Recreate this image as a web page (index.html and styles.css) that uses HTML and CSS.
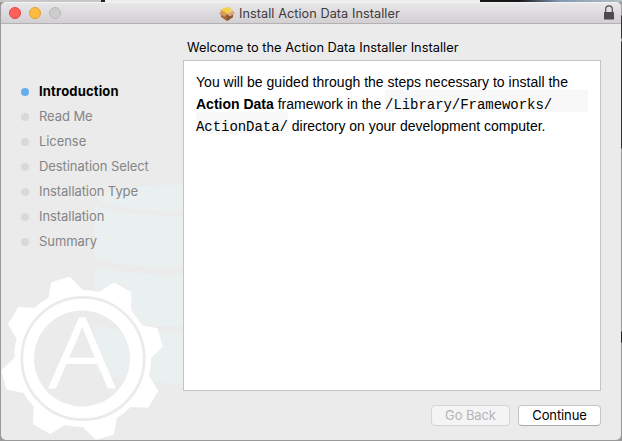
FILE: index.html
```html
<!DOCTYPE html>
<html lang="en">
<head>
<meta charset="utf-8">
<title>Install Action Data Installer</title>
<link rel="stylesheet" href="styles.css">
</head>
<body>
<main class="window">
  <header class="titlebar">
    <div class="lights"><i class="light red"></i><i class="light yellow"></i><i class="light off"></i></div>
    <div class="title">
      <svg class="package" viewBox="0 0 16 15" width="16" height="15">
        <path d="M2 6 8 8 14 6v5l-6 4-6-4z" fill="#a4683a"/>
        <path d="M8 9 14 6v5l-6 4z" fill="#8a5630"/>
        <path d="M1.500 3.500 9 .8 13.500 4 8 8z" fill="#f6cf4c"/>
        <path d="M1.500 3.500 8 7v1.500L2 6z" fill="#e0a93a"/>
        <path d="M2 5.5 0 8l5.500 2.500L8 8.300z" fill="#d3986a"/>
        <path d="M14 4.500 16 7.500l-5.500 3L8 8z" fill="#dca67c"/>
      </svg>
      <span class="title-text">Install Action Data Installer</span>
    </div>
    <svg class="lock" viewBox="0 0 10 15" width="10" height="15">
      <path d="M1.700 8V4.200a3.300 3.300 0 0 1 6.600 0V8" fill="none" stroke="#4e4b4f" stroke-width="1.2"/>
      <rect y="7" width="10" height="7.5" rx=".6" fill="#4e4b4f"/>
    </svg>
  </header>
  <div class="content">
    <svg class="artwork" viewBox="0 0 190 441" width="190" height="441">
      <g class="cylinder">
        <path d="M97 195C115 187 150 185 184 185V211C150 212 110 207 97 199z"/>
        <path d="M95 206C118 213 150 216 184 217V268C150 268 117 265 95 259z"/>
        <path d="M95 266C118 272 150 275 184 275V326C150 327 117 323 95 317z"/>
        <path d="M95 325C118 330 150 332 184 332V383C150 384 117 379 95 373z"/>
      </g>
      <path class="gear" d="M51.3 282.3 70 276.7 82.7 290Q91 290 99.3 292L114 282.5 131.3 292.3V310L142.3 325.3 157.7 328.3 162.7 346.7 151 358.3Q151 367 149 375.7L158.3 390.7 148.3 407.7 130.7 407Q125 413 117 417.7L113.7 434.7 95.7 439.7 83 427Q74 427 65.3 425L50.3 434 33 424.3 33.7 406.3Q28 401 23.7 393L6.3 389.3 1.3 370.3 14.7 357.7Q14 348 16.7 339.3L8 324.3 18.3 307 34.3 308Q40 302 48.3 298.3z"/>
      <circle class="disc" cx="82" cy="358.5" r="48"/>
      <path class="cylinder" d="M95 325C105 328 115 329 120.500 330.500A48 48 0 0 1 125.500 378.500Q108 377 95 373z"/>
      <circle class="ring" cx="83" cy="358.5" r="61.2"/>
      <text class="letter" x="49.5" y="387" textLength="65" lengthAdjust="spacingAndGlyphs">A</text>
    </svg>
    <ol class="steps">
      <li class="active"><span>Introduction</span></li>
      <li><span>Read Me</span></li>
      <li><span>License</span></li>
      <li><span>Destination Select</span></li>
      <li><span>Installation Type</span></li>
      <li><span>Installation</span></li>
      <li><span>Summary</span></li>
    </ol>
    <section class="pane">
      <h1>Welcome to the Action Data Installer Installer</h1>
      <div class="document">
        <p class="line l1">You will be guided through the steps necessary to install the</p>
        <p class="line l2"><b>Action Data</b> framework in the <code class="path">/Library/Frameworks/</code></p>
        <p class="line l3"><code>ActionData/</code> directory on your development computer.</p>
      </div>
      <div class="actions">
        <button class="back" disabled>Go Back</button>
        <button class="next">Continue</button>
      </div>
    </section>
  </div>
</main>
</body>
</html>
```
FILE: styles.css
```css
* { box-sizing: border-box; }
body {
  margin: 0;
  width: 622px;
  height: 441px;
  overflow: hidden;
  padding: 2px 1px 1px;
  background:
    linear-gradient(#c7c7c7, #c7c7c7) 0 0 / 101px 2px no-repeat,
    linear-gradient(#222, #222) 101px 0 / 4px 2px no-repeat,
    linear-gradient(#eee, #eee) 105px 0 / 375px 2px no-repeat,
    linear-gradient(90deg, #171717 0 40px, #8298b5 80px, #afc0c0) 479px 0 / 143px 2px no-repeat,
    linear-gradient(#a0a0a0 0 15px, #333 16px 38px, #aaa 39px 41px, #333 42px 148px, #999 149px 331px, #222 332px 342px, #999 343px) 621px 0 / 1px 441px no-repeat,
    #999;
  font-family: Inter, "Liberation Sans", sans-serif;
  font-size: 13px;
}
.window {
  height: 438px;
  background: #ebebeb;
  border-radius: 5px;
  overflow: hidden;
}
.titlebar {
  display: flex;
  align-items: center;
  height: 22px;
  padding: 0 7px 0 8px;
  background: linear-gradient(#e8e6e8, #d2d0d2);
  border-top: 1px solid #f4f3f4;
  border-bottom: 1px solid #b3b1b3;
}
.lights { display: flex; gap: 8px; width: 210px; }
.light { width: 12px; height: 12px; border-radius: 50%; border: 1px solid; }
.red { background: #fc605b; border-color: #e2463f; }
.yellow { background: #fdbc40; border-color: #dfa033; }
.off { background: #cecdce; border-color: #b9b8b9; }
.title { display: flex; align-items: center; gap: 4px; color: #3d3b3d; }
.title-text { font-size: 12.7px; letter-spacing: .06px; white-space: nowrap; }
.lock { margin: -2px 0 0 auto; }
.content { position: relative; display: flex; height: 416px; }
.artwork { position: absolute; left: -1px; top: -24px; }
.cylinder { fill: #eaeff0; }
.gear { fill: #fff; }
.disc { fill: #ebebeb; }
.ring { fill: none; stroke: #ebebeb; stroke-width: 2.8; }
.letter { font: 300 95px "Open Sans", sans-serif; fill: #fff; stroke: #fff; stroke-width: 1.8; }
.steps { position: relative; width: 182px; margin: 0; padding: 55px 0 0 20px; list-style: none; color: #858585; }
.steps li { display: flex; align-items: center; height: 25px; gap: 10px; letter-spacing: -.07px; }
.steps span { padding-bottom: 1px; }
.steps li::before { content: ""; width: 8px; height: 8px; border-radius: 50%; background: #d9d9d9; }
.steps .active { color: #000; font-weight: 700; letter-spacing: .17px; }
.steps .active::before { background: #65aeeb; }
.pane { position: relative; width: 418px; padding-top: 15px; }
h1 { margin: 0 0 0 4px; height: 21px; font-size: 12.8px; line-height: 18px; font-weight: 400; white-space: nowrap; letter-spacing: .02px; }
.document {
  height: 331px;
  padding: 7px 12px;
  background: #fff;
  border: 1px solid #c5c5c5;
  font-family: "Liberation Sans", Arial, sans-serif;
  font-size: 14px;
  line-height: 28px;
}
.line { display: flex; margin: 0; height: 22px; white-space: pre; }
.l1 { letter-spacing: .02px; }
code { height: 22px; background: #f8f8f8; font-family: "Liberation Mono", monospace; font-size: 14px; line-height: 30px; letter-spacing: -.05px; }
.path { flex: 1; }
.actions { display: flex; justify-content: flex-end; gap: 8px; padding-top: 14px; }
button { height: 21px; padding: 0 0 1px; border: 1px solid #c5c5c5; border-bottom-color: #aaa; border-radius: 4px; background: #fff; color: #000; font: 13px/18px Inter, sans-serif; letter-spacing: -.1px; }
.back { width: 79px; background: #f4f4f4; border-color: #d5d5d5; color: #b5b5b5; }
.next { width: 83px; }
```
